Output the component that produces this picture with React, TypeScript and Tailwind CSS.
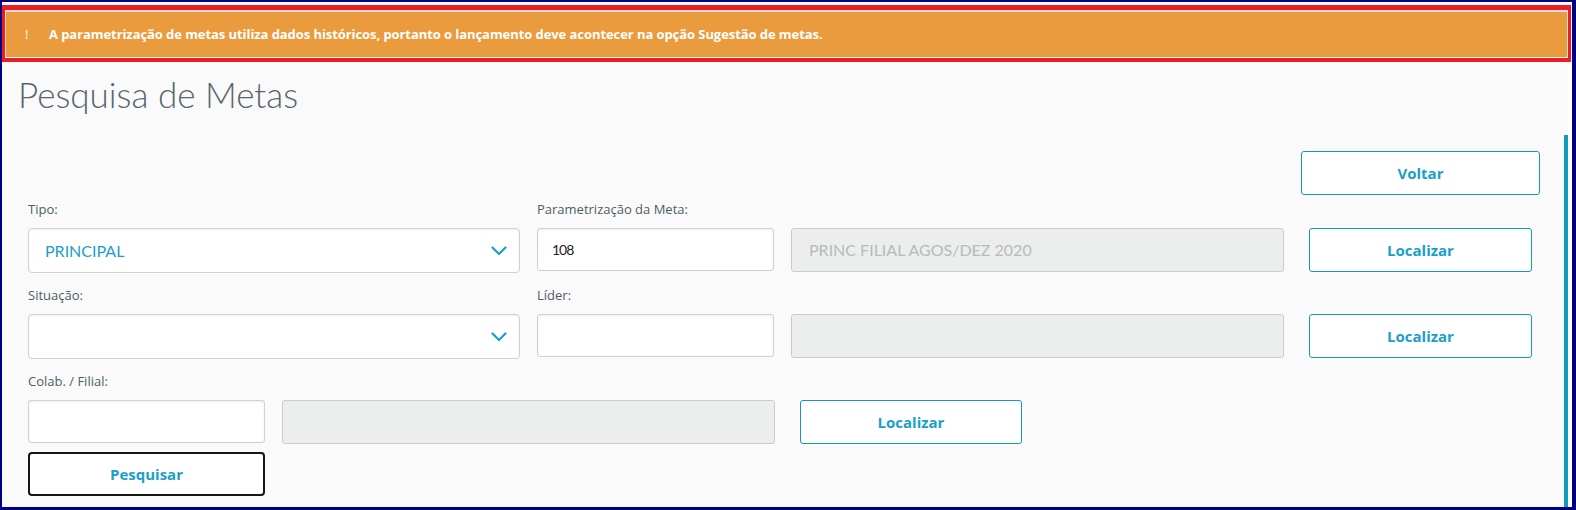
import React from "react";

const LATO = { fontFamily: "Lato, 'Open Sans', sans-serif" };
const OPEN = { fontFamily: "'Open Sans', Lato, sans-serif" };

function Chevron() {
  return (
    <svg width="16" height="10" viewBox="0 0 16 10" fill="none">
      <path d="M1.5 1.5 L8 8 L14.5 1.5" stroke="#1a9fc9" strokeWidth="2.2" strokeLinecap="round" strokeLinejoin="round" />
    </svg>
  );
}

function Label({ children, className = "" }: { children: React.ReactNode; className?: string }) {
  return (
    <div style={OPEN} className={`h-[20px] text-[13px] leading-[20px] text-[#4f5d65] ${className}`}>
      {children}
    </div>
  );
}

function Select({ value }: { value?: string }) {
  return (
    <div className="w-[492px] h-[45px] flex items-center justify-between pl-[16px] pr-[12px] bg-white border border-[#cdd2d4] rounded-[4px] shadow-[inset_0_1px_2px_rgba(0,0,0,0.06)]">
      <span className="text-[16px] text-[#1a9fc9]">{value ?? ""}</span>
      <Chevron />
    </div>
  );
}

function TextInput({ value, w = "w-[237px]" }: { value?: string; w?: string }) {
  return (
    <div className={`${w} h-[43px] flex items-center pl-[14px] bg-white border border-[#cdd2d4] rounded-[3px] shadow-[inset_0_1px_3px_rgba(0,0,0,0.07)]`}>
      <span className="text-[14px] tracking-[-1px] text-[#1e1e1e]">{value ?? ""}</span>
    </div>
  );
}

function Disabled({ value }: { value?: string }) {
  return (
    <div className="w-[493px] h-[44px] flex items-center pl-[17px] bg-[#eceeee] border border-[#c9cccc] rounded-[3px]">
      <span className="text-[16px] text-[#b6babb]">{value ?? ""}</span>
    </div>
  );
}

function OutlineButton({ children, w = "w-[223px]" }: { children: React.ReactNode; w?: string }) {
  return (
    <button
      style={OPEN}
      className={`${w} h-[44px] flex items-center justify-center border border-[#1597c1] rounded-[3px] bg-white text-[15px] font-bold text-[#1a9fc9]`}
    >
      {children}
    </button>
  );
}

export default function App() {
  return (
    <div style={LATO} className="w-[1576px] h-[510px] bg-[#000080] pt-[2px] pl-[2px] pr-[4px] pb-[3px]">
      <div className="w-full h-full bg-white flex flex-col">
        {/* warning banner */}
        <div className="mt-[3px] mr-[1px] border-[#ee1c25] border-t-[5px] border-b-[4px] border-l-[3px] border-r-[3px]">
          <div
            style={OPEN}
            className="h-[48px] bg-[#e99b3e] border-t-[2px] border-t-[#dcdcdc] border-b border-b-white border-l border-l-[#f6e3c8] border-r border-r-[#f6e3c8] flex items-center text-white text-[13px] font-bold"
          >
            <span className="w-[43px] pl-[19px] font-normal">!</span>
            <span className="tracking-[-0.07px]">
              A parametrização de metas utiliza dados históricos, portanto o lançamento deve acontecer na opção Sugestão de metas.
            </span>
          </div>
        </div>

        {/* page */}
        <div className="flex-1 flex mr-[4px] bg-[#fafafa]">
          <div className="flex-1 flex flex-col">
            <h1 className="pl-[16px] mt-[12px] text-[35px] leading-[40px] font-light text-[#56666e]">Pesquisa de Metas</h1>

            <div className="flex justify-end pr-[24px] mt-[37px]">
              <OutlineButton w="w-[239px]">Voltar</OutlineButton>
            </div>

            <div className="pl-[26px] mt-[4px] flex flex-col">
              {/* row 1 */}
              <div className="flex">
                <Label className="w-[509px]">Tipo:</Label>
                <Label>Parametrização da Meta:</Label>
              </div>
              <div className="flex items-start mt-[9px]">
                <Select value="PRINCIPAL" />
                <div className="ml-[17px]"><TextInput value="108" /></div>
                <div className="ml-[17px]"><Disabled value="PRINC FILIAL AGOS/DEZ 2020" /></div>
                <div className="ml-[25px]"><OutlineButton>Localizar</OutlineButton></div>
              </div>

              {/* row 2 */}
              <div className="flex mt-[12px]">
                <Label className="w-[509px]">Situação:</Label>
                <Label>Líder:</Label>
              </div>
              <div className="flex items-start mt-[9px]">
                <Select />
                <div className="ml-[17px]"><TextInput /></div>
                <div className="ml-[17px]"><Disabled /></div>
                <div className="ml-[25px]"><OutlineButton>Localizar</OutlineButton></div>
              </div>

              {/* row 3 */}
              <div className="flex mt-[12px]">
                <Label>Colab. / Filial:</Label>
              </div>
              <div className="flex items-start mt-[9px]">
                <TextInput />
                <div className="ml-[17px]"><Disabled /></div>
                <div className="ml-[25px]"><OutlineButton w="w-[222px]">Localizar</OutlineButton></div>
              </div>

              <button
                style={OPEN}
                className="mt-[8px] w-[237px] h-[44px] border-2 border-[#161616] rounded-[4px] bg-white text-[15px] font-bold text-[#1a9fc9]"
              >
                Pesquisar
              </button>
            </div>
          </div>
          {/* scroll indicator */}
          <div className="w-[4px] mt-[73px] bg-[#0f9bc2]" />
        </div>
      </div>
    </div>
  );
}
